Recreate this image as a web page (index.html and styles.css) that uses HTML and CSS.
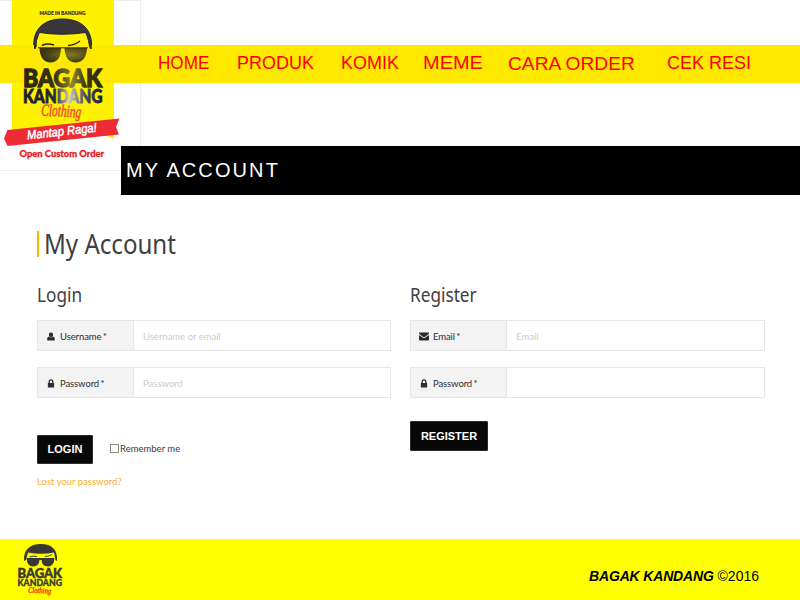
FILE: index.html
```html
<!DOCTYPE html>
<html lang="en">
<head>
<meta charset="utf-8">
<title>My Account - Bagak Kandang</title>
<link rel="stylesheet" href="styles.css">
</head>
<body>
<svg class="defs" aria-hidden="true">
  <defs>
    <linearGradient id="shine" x1="0" y1="0" x2="1" y2="0">
      <stop offset="0" stop-color="#1d1d35"/><stop offset=".4" stop-color="#25253b"/>
      <stop offset=".58" stop-color="#c9c9d0"/><stop offset=".78" stop-color="#4a4a5c"/><stop offset="1" stop-color="#1d1d35"/>
    </linearGradient>
    <linearGradient id="dim" x1="0" y1="0" x2="1" y2="0">
      <stop offset="0" stop-color="#29260f"/><stop offset=".4" stop-color="#363214"/>
      <stop offset=".62" stop-color="#8e8430"/><stop offset=".78" stop-color="#3b3717"/><stop offset="1" stop-color="#29260f"/>
    </linearGradient>
    <radialGradient id="lens" cx=".65" cy=".45" r=".6">
      <stop offset="0" stop-color="#857a22"/><stop offset="1" stop-color="#3b350f"/>
    </radialGradient>
    <symbol id="user" viewBox="0 0 10 10"><path d="M5 .5C6.5.5 7.400 1.500 7.300 3C7.200 4.700 6.300 5.700 5 5.700S2.800 4.700 2.700 3C2.600 1.500 3.500.5 5 .5ZM2.800 5C4 6.500 6 6.500 7.200 5C8.800 5.300 9.300 6.900 9.300 8.200Q9.300 9.500 8 9.500H2Q.7 9.500.7 8.200C.7 6.900 1.200 5.300 2.800 5Z"/></symbol>
    <symbol id="lock" viewBox="0 0 10 10"><path fill-rule="evenodd" d="M2.300 4.500V3.200A2.600 2.800 0 0 1 7.700 3.200V4.500H8.500V9.500H1.500V4.500ZM3.700 4.500H6.300V3.200A1.300 1.500 0 0 0 3.700 3.200Z"/></symbol>
    <symbol id="mail" viewBox="0 0 10 8"><path d="M.5 0H9.500Q10 0 10 .8Q10 1.600 8.500 2.600L5.700 4.500Q5 4.900 4.300 4.500L1.500 2.600Q0 1.600 0 .8Q0 0 .5 0ZM0 2.500L4 5.300Q5 5.900 6 5.300L10 2.500V7.200Q10 8 9.200 8H.8Q0 8 0 7.200Z"/></symbol>
  </defs>
</svg>

<header class="header">
  <nav class="nav">
    <a class="home" href="#">HOME</a>
    <a class="produk" href="#">PRODUK</a>
    <a class="komik" href="#">KOMIK</a>
    <a class="meme" href="#">MEME</a>
    <a class="order" href="#">CARA ORDER</a>
    <a class="resi" href="#">CEK RESI</a>
  </nav>
  <a class="logo" href="#">
    <svg width="141" height="171" viewBox="0 0 141 171">
      <rect x="-.5" y=".5" width="141" height="170" fill="#fefefe" stroke="#eeeeee"/>
      <path d="M12 0H114V139L104 135L12 132Z" fill="#fff200"/>
      <path d="M34 49C32 30 43 19 62.500 19S93 30 91.500 49H90L88.500 40.500C87.500 38 87 35 85.500 32.500Q62 36 39.500 32.500C38 35 37.500 38 36.500 40.500L35.500 49Z" fill="#39353a" stroke="#1f2040" stroke-width="1"/>
      <rect x="0" y="45" width="141" height="38" fill="#ffe900"/>
      <path d="M34 45H37L35.500 49H34ZM88.700 45H91.700V49H90Z" fill="#2e2a12"/>
      <text class="t-round" x="39.500" y="15" font-size="6" textLength="46" lengthAdjust="spacingAndGlyphs" fill="#39351f" stroke="#39351f" stroke-width=".2">MADE IN BANDUNG</text>
      <path d="M42 45.500Q47 43 54 45M68 45.500Q75 45 80 41" fill="none" stroke="#28263a" stroke-width="1.500"/>
      <path d="M39.500 48H61Q61 62 50.500 62.500Q40 62 39.500 48ZM64.500 48H87Q86.500 62 75.500 62.500Q65 62 64.500 48Z" fill="url(#lens)"/>
      <path d="M38 47.800H88" stroke="#302b13" stroke-width="1"/>
      <text class="t-heavy" x="23" y="86.500" font-size="25" textLength="79" lengthAdjust="spacingAndGlyphs" fill="url(#dim)" stroke="url(#dim)" stroke-width="1.300">BAGAK</text>
      <text class="t-heavy" x="23" y="103" font-size="18.500" textLength="79.500" lengthAdjust="spacingAndGlyphs" fill="url(#shine)" stroke="url(#shine)" stroke-width=".8">KANDANG</text>
      <text class="t-script" transform="translate(41 115.500) rotate(3)" font-size="17" textLength="40" lengthAdjust="spacingAndGlyphs" fill="#ed4b32" stroke="#ed4b32" stroke-width=".5">Clothing</text>
      <path d="M7.500 130L119.500 118.500L116 127L119 134.500L7.500 146L4 138.500Z" fill="#ed2b34"/>
      <text class="t-ribbon" transform="translate(27.500 139.500) rotate(-6.500)" font-size="12.500" textLength="70" lengthAdjust="spacingAndGlyphs" fill="#fff" stroke="#fff" stroke-width=".5">Mantap Raga!</text>
      <text class="t-round" x="19.500" y="156.500" font-size="9.500" textLength="84.500" lengthAdjust="spacingAndGlyphs" fill="#e51f2b" stroke="#e51f2b" stroke-width=".3">Open Custom Order</text>
    </svg>
  </a>
</header>
<div class="banner">MY ACCOUNT</div>

<main class="main">
  <h1 class="title"><span>My Account</span></h1>
  <div class="columns">
    <form class="col">
      <h2 class="subtitle">Login</h2>
      <div class="field"><label class="label" for="lu"><svg class="icon"><use href="#user"/></svg>Username *</label><input class="input" id="lu" type="text" placeholder="Username or email"></div>
      <div class="field"><label class="label" for="lp"><svg class="icon"><use href="#lock"/></svg>Password *</label><input class="input" id="lp" type="password" placeholder="Password"></div>
      <div class="actions"><button class="btn btn-login" type="button">LOGIN</button><label class="remember"><input class="check" type="checkbox">Remember me</label></div>
      <a class="lost" href="#">Lost your password?</a>
    </form>
    <form class="col">
      <h2 class="subtitle">Register</h2>
      <div class="field"><label class="label" for="re"><svg class="icon"><use href="#mail"/></svg>Email *</label><input class="input" id="re" type="text" placeholder="Email"></div>
      <div class="field"><label class="label" for="rp"><svg class="icon"><use href="#lock"/></svg>Password *</label><input class="input" id="rp" type="password"></div>
      <button class="btn btn-register" type="button">REGISTER</button>
    </form>
  </div>
</main>

<footer class="footer">
  <svg class="footer-logo" width="50" height="54" viewBox="0 0 50 54">
    <path d="M8.200 18C7 7 14 1 25 1S42 7 41 18L39.500 17L38 9.500Q25 12 12 9.500L10 17Z" fill="#3a3832"/>
    <path d="M13.500 14Q17 12.500 21 13.500M29 13.500Q33 13.500 36 11.500" fill="none" stroke="#3a3832" stroke-width="1"/>
    <path d="M10.500 15H38.500Q38 23.500 32 23.500Q26 23.500 25.500 17H23.500Q23 23.500 17 23.500Q11 23.500 10.500 15Z" fill="#3a3832"/>
    <text class="t-heavy" x="1.500" y="34.500" font-size="13.500" textLength="44.500" lengthAdjust="spacingAndGlyphs" fill="#3a3832" stroke="#3a3832" stroke-width=".5">BAGAK</text>
    <text class="t-heavy" x="1.500" y="43" font-size="9" textLength="44.500" lengthAdjust="spacingAndGlyphs" fill="#3a3832" stroke="#3a3832" stroke-width=".3">KANDANG</text>
    <text class="t-script" transform="translate(12 49.500) rotate(3)" font-size="8" textLength="23" lengthAdjust="spacingAndGlyphs" fill="#f02a16" stroke="#f02a16" stroke-width=".3">Clothing</text>
  </svg>
  <p class="copy"><b>BAGAK KANDANG</b> ©2016</p>
</footer>
</body>
</html>
```
FILE: styles.css
```css
* { box-sizing: border-box; }
body { margin: 0; height: 600px; display: flex; flex-direction: column; background: #fff; overflow: hidden; font-family: Lato, sans-serif; color: #333; }
a { text-decoration: none; }
.defs { position: absolute; width: 0; height: 0; }

.header { position: relative; height: 146px; padding-top: 45px; flex: none; }
.logo { position: absolute; left: 0; top: 0; }
.logo svg { display: block; }
.t-round { font-family: Lato, sans-serif; font-weight: 900; }
.t-heavy { font-family: Lato, sans-serif; font-weight: 900; }
.t-script { font-family: "Liberation Serif", serif; font-style: italic; }
.t-ribbon { font-family: "Liberation Sans", sans-serif; font-style: italic; }

.nav { height: 38px; padding-left: 158px; display: flex; background: #ffe900; font: 18px/36px "Liberation Sans", Arial, sans-serif; }
.nav a { color: #f00; white-space: nowrap; transform-origin: 0 50%; flex: none; }
.home { width: 79px; transform: scaleX(.95); }
.produk { width: 104px; }
.komik { width: 82px; }
.meme { width: 85px; transform: scaleX(1.11); }
.order { width: 159px; padding-top: 1px; transform: scaleX(1.065); }

.banner { position: relative; margin-left: 121px; height: 49px; padding-left: 5px; flex: none; background: #000; color: #fff; font: 20px/49px "Liberation Sans", Arial, sans-serif; letter-spacing: 2.1px; }

.main { flex: 1; padding: 36px 35px 0 37px; }
.title { margin: 0; height: 26px; border-left: 2px solid #ffb400; padding-left: 5px; font: 400 28px/25px "Noto Sans", sans-serif; color: #3f4041; }
.title span { display: inline-block; transform: scaleX(.86); transform-origin: 0 50%; }
.columns { display: grid; grid-template-columns: 354px 355px; column-gap: 19px; }
.subtitle { margin: 25px 0 12px; font: 400 20px/26px "Noto Sans", sans-serif; color: #3f4041; transform: scaleX(.86); transform-origin: 0 50%; }
.field { display: flex; height: 31px; margin-bottom: 16px; border: 1px solid #e6e6e6; }
.label { width: 96px; flex: none; display: flex; align-items: center; padding: 1px 0 0 8px; background: #f3f3f3; border-right: 1px solid #e6e6e6; font-size: 9.5px; word-spacing: -1px; letter-spacing: -.1px; color: #2c2c2c; }
.icon { width: 10px; height: 9px; margin-right: 4px; fill: #2c2c2c; }
.input { flex: 1; min-width: 0; border: 0; padding: 1px 0 0 9px; outline: 0; background: #fff; font: 9.5px Lato, sans-serif; color: #333; }
.input::placeholder { color: #cbcbcb; opacity: 1; }
.actions { display: flex; align-items: center; margin-top: 37px; }
.btn { display: block; border: 1px solid #2b2b2b; border-radius: 1px; padding: 0; background: #080808; color: #fff; font: bold 11px "Liberation Sans", Arial, sans-serif; }
.btn-login { width: 56px; height: 29px; padding-bottom: 1px; }
.btn-register { width: 78px; height: 30px; margin-top: 23px; padding-bottom: 1px; }
.remember { display: flex; align-items: center; margin: -2px 0 0 17px; font-size: 9.5px; color: #3c3c3c; }
.check { appearance: none; width: 9px; height: 9px; margin: 0 1px 0 0; border: 1px solid #8a8a8a; background: #fff; }
.lost { display: block; margin-top: 12px; font-size: 9.5px; line-height: 12px; color: #fbb033; }

.footer { flex: none; height: 61px; display: flex; align-items: flex-start; justify-content: space-between; padding: 4px 41px 0 16px; background: #ff0; }
.copy { margin: 24px 0 0; font: 14px/18px "Liberation Sans", Arial, sans-serif; color: #000; }
.copy b { font-style: italic; letter-spacing: -.17px; }
```
